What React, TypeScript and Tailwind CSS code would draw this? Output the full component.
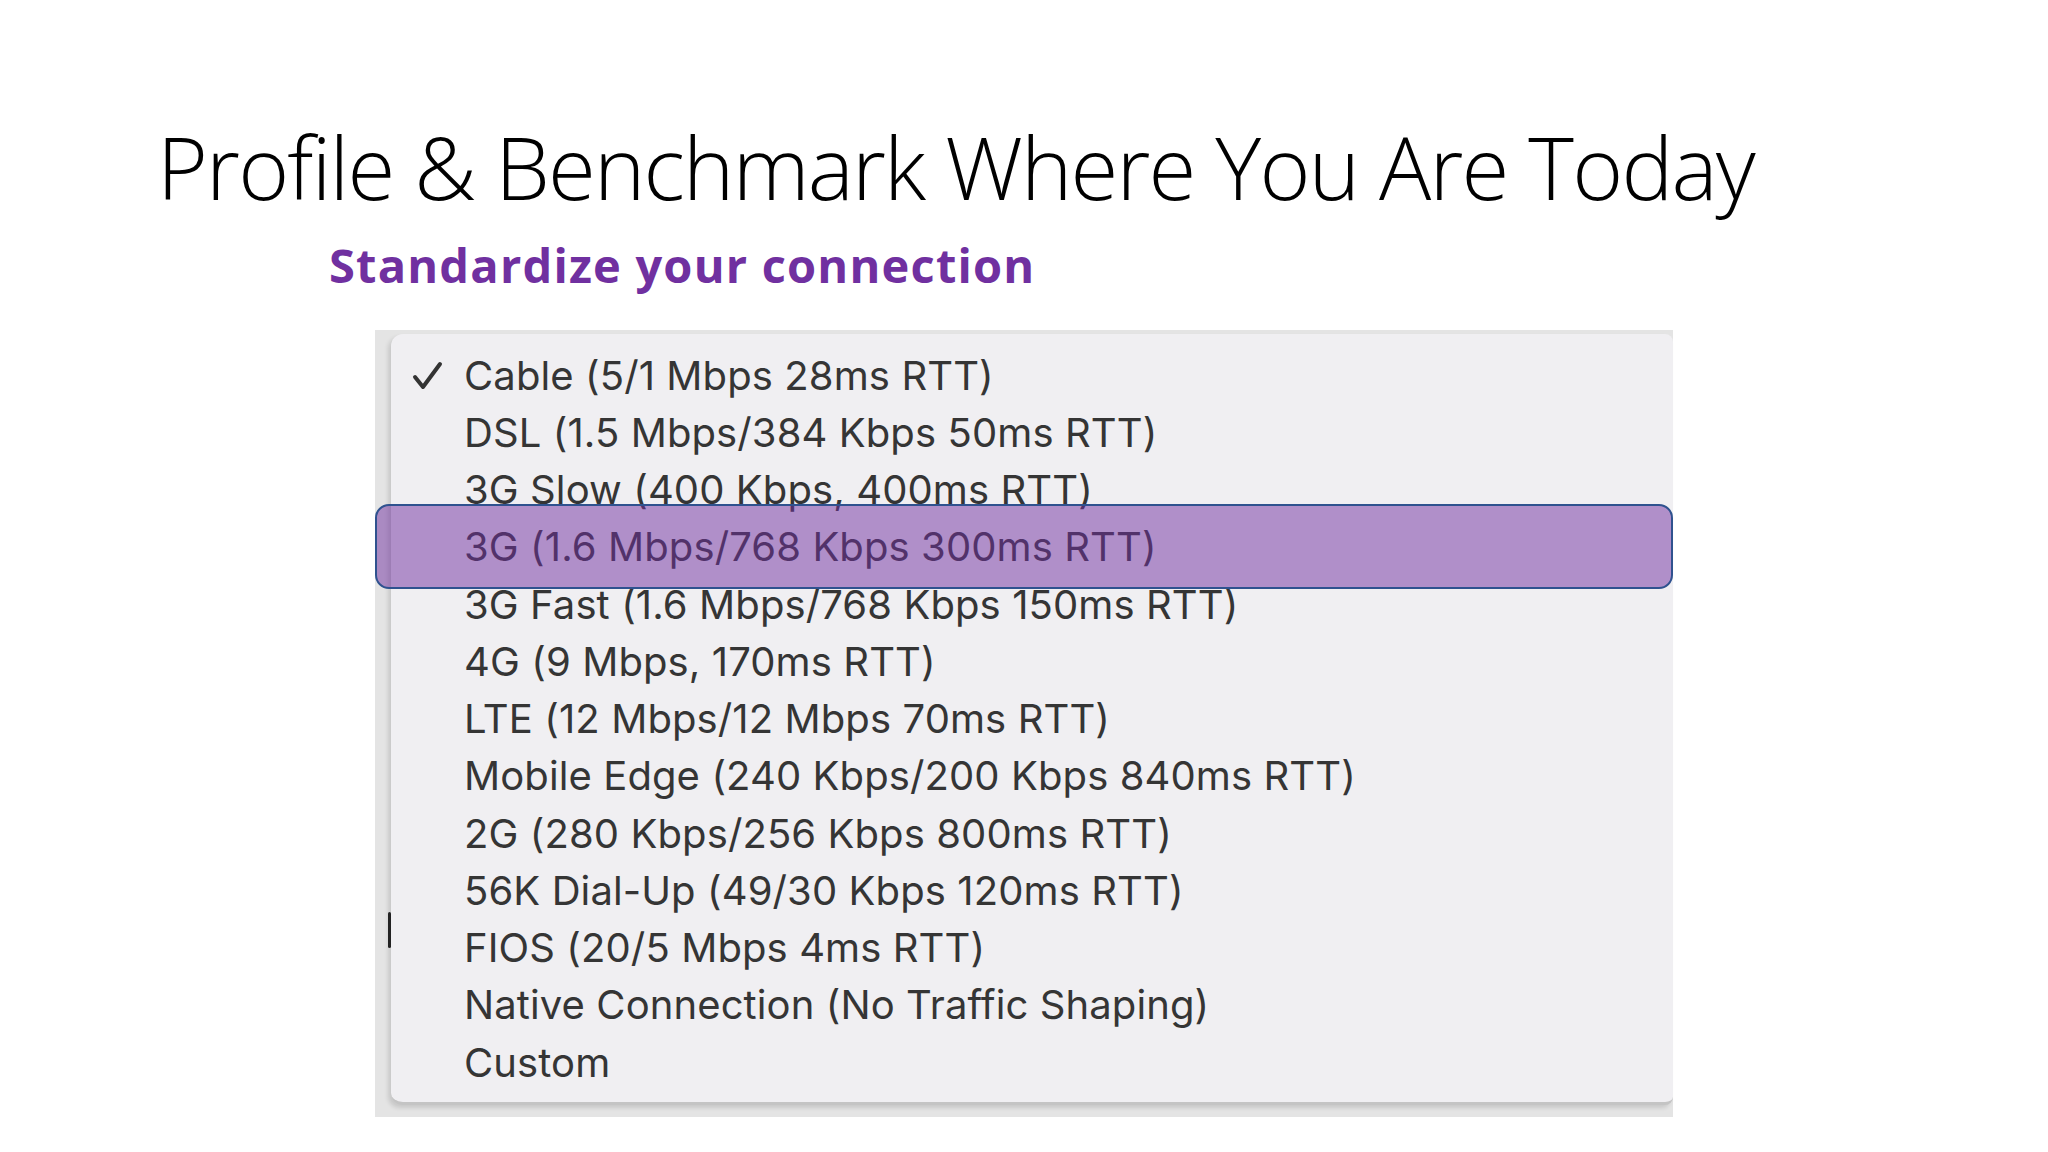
import React from 'react';

const OPTIONS = [
  'Cable (5/1 Mbps 28ms RTT)',
  'DSL (1.5 Mbps/384 Kbps 50ms RTT)',
  '3G Slow (400 Kbps, 400ms RTT)',
  '3G (1.6 Mbps/768 Kbps 300ms RTT)',
  '3G Fast (1.6 Mbps/768 Kbps 150ms RTT)',
  '4G (9 Mbps, 170ms RTT)',
  'LTE (12 Mbps/12 Mbps 70ms RTT)',
  'Mobile Edge (240 Kbps/200 Kbps 840ms RTT)',
  '2G (280 Kbps/256 Kbps 800ms RTT)',
  '56K Dial-Up (49/30 Kbps 120ms RTT)',
  'FIOS (20/5 Mbps 4ms RTT)',
  'Native Connection (No Traffic Shaping)',
  'Custom',
];

// the throttling menu, pasted into the slide as a screenshot
const ThrottleMenu: React.FC = () => (
  <div className="relative ml-[375px] mt-[37px] w-[1298px] h-[787px] bg-[#e4e4e4] flex flex-col">
    <div className="flex-1 ml-[16px] mt-[4px] mb-[12px] rounded-[12px] rounded-r-[8px] bg-[#f0eff2] shadow-[-3px_3px_4px_rgba(0,0,0,0.12)] border-b-[3px] border-[#c4c4c4] pt-[13px]">
      {OPTIONS.map((label, i) => (
        <div key={label} className="h-[57.25px] flex items-center">
          <span className="w-[73px] flex justify-end pr-[20px]">
            {i === 0 && (
              <svg width="32" height="30" viewBox="0 0 32 30">
                <path d="M3 16 L11 26 L28 3" fill="none" stroke="#333" strokeWidth="4" strokeLinecap="round" strokeLinejoin="round" />
              </svg>
            )}
          </span>
          <span className="text-[40px] text-[#353535] tracking-[0.1px]" style={{ fontFamily: 'Inter, "Liberation Sans", sans-serif' }}>
            {label}
          </span>
        </div>
      ))}
    </div>
    <div className="absolute left-[13px] top-[582px] w-[3px] h-[36px] bg-[#222] rounded-full" />
    <div className="absolute left-0 top-[174px] w-[1298px] h-[85px] rounded-[14px] border-2 border-[#2F528F] bg-[#7030A0]/50" />
  </div>
);

const App: React.FC = () => {
  return (
    <div className="w-[2048px] h-[1152px] bg-white overflow-hidden flex flex-col" style={{ fontFamily: '"Open Sans", sans-serif' }}>
      <h1 className="pt-[116px] pl-[157px] text-[87px] leading-[100px] font-light tracking-[-1.8px] text-black">
        Profile &amp; Benchmark Where You Are Today
      </h1>
      <h2 className="mt-[21px] pl-[329px] text-[47px] leading-[56px] font-bold tracking-[1.2px] text-[#7030A0]">
        Standardize your connection
      </h2>
      <ThrottleMenu />
    </div>
  );
};

export default App;
